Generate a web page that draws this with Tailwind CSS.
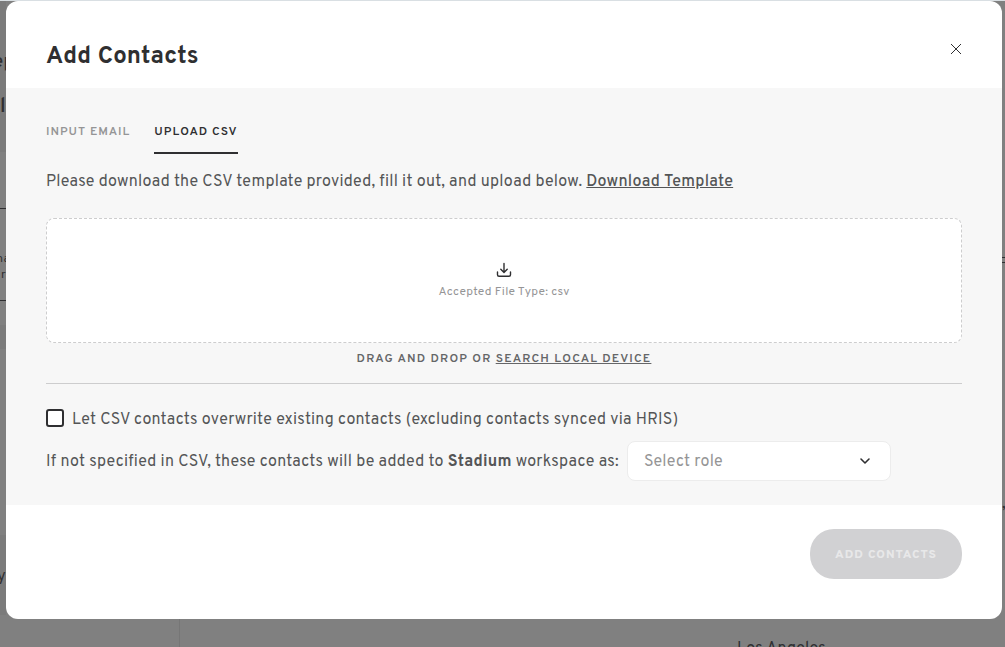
<!DOCTYPE html>
<html lang="en">
<head>
    <meta charset="UTF-8">
    <meta name="viewport" content="width=device-width, initial-scale=1.0">
    <title>Add Contacts</title>
    <script src="https://cdn.jsdelivr.net/npm/@tailwindcss/browser@4"></script>
</head>
<body class="relative h-screen overflow-hidden bg-[#808080] font-['Overpass','Roboto',sans-serif] text-base tracking-[0.016em] text-[#545556]">

<!-- Dimmed page -->
<div class="absolute inset-0 flex flex-col border-t border-[#d9dfe3] text-[#2f2f31]" aria-hidden="true">
    <div class="flex grow justify-between">
        <div class="flex w-1.5 flex-col items-end overflow-hidden">
            <div class="flex h-[151px] flex-col items-end bg-[#7b7b7b] pt-[50px] font-semibold">
                <p class="-mr-2 h-10 text-lg leading-6">ep</p>
                <p class="pt-1 text-xl leading-6">il</p>
            </div>
            <div class="mt-14 flex h-[93px] w-10 flex-col items-end border-y border-[#2f2f31] pt-[42px] text-xs">
                <p class="-mr-1">na</p>
                <p>r</p>
            </div>
            <div class="mt-6 h-6 w-full bg-[#7b7b7b]"></div>
            <div class="mt-[186px] flex h-20 flex-col items-end bg-[#7b7b7b] pt-[30px]">
                <p>y</p>
            </div>
        </div>
        <div class="w-[3px] overflow-hidden">
            <div class="mt-64 h-1.5 border-y border-[#2f2f31]"></div>
            <p class="mt-[229px]">,</p>
        </div>
    </div>
    <div class="flex h-7 overflow-hidden">
        <div class="w-[180px] shrink-0 border-r border-[#767676]"></div>
        <p class="ml-[557px] pt-[18px]">Los Angeles</p>
    </div>
</div>

<!-- Modal -->
<div class="relative mt-px mr-[3px] ml-1.5 overflow-hidden rounded-xl bg-white" role="dialog" aria-labelledby="modalTitle">
    <div class="flex items-start justify-between px-10 pt-10 pb-[15px]">
        <h1 id="modalTitle" class="text-2xl leading-8 font-bold text-[#2f2f31]">Add Contacts</h1>
        <button type="button" aria-label="Close" class="mt-0.5">
            <svg class="size-3" viewBox="0 0 12 12" fill="none" stroke="#2f2f31"><path d="M1 1l10 10M11 1L1 11"/></svg>
        </button>
    </div>

    <div class="bg-[#f7f7f7] px-10 pt-8 pb-6">
        <!-- Tabs -->
        <div class="flex gap-6 text-xs font-semibold tracking-[1px]" role="tablist">
            <button type="button" role="tab" aria-selected="false" class="pt-1 pb-3.5 text-[#959596]">INPUT EMAIL</button>
            <button type="button" role="tab" aria-selected="true" class="border-b-2 border-[#2f2f31] pt-1 pb-3 text-[#2f2f31]">UPLOAD CSV</button>
        </div>

        <p class="mt-4 leading-6">Please download the CSV template provided, fill it out, and upload below. <a href="#" class="font-medium underline">Download Template</a></p>

        <!-- Drop zone -->
        <div class="mt-6 flex h-[125px] flex-col items-center justify-center gap-1.5 rounded-lg border border-dashed border-[#cdcdce] bg-white">
            <svg class="size-4" viewBox="0 0 16 16" fill="none" stroke="#2f2f31" stroke-width="1.4" stroke-linecap="round" stroke-linejoin="round"><path d="M8 1.500v8.500M4.800 7.200L8 10.400l3.200-3.200M1.500 10v2.800c0 .9.600 1.500 1.500 1.500h10c.9 0 1.500-.6 1.500-1.500V10"/></svg>
            <p class="text-xs text-[#959596]">Accepted File Type: csv</p>
        </div>
        <p class="mt-2 text-center text-xs font-semibold tracking-widest text-[#656668]">DRAG AND DROP OR <a href="#" class="underline">SEARCH LOCAL DEVICE</a></p>

        <hr class="mt-4 border-[#cdcdce]">

        <label class="mt-[25px] flex items-start gap-2 leading-[22px]">
            <input type="checkbox" class="size-[18px] appearance-none rounded-[3px] border-2 border-[#2f2f31] bg-white">
            Let CSV contacts overwrite existing contacts (excluding contacts synced via HRIS)
        </label>

        <div class="mt-2.5 flex items-center gap-2">
            <label for="role" class="pt-0.5">If not specified in CSV, these contacts will be added to <strong class="font-bold">Stadium</strong> workspace as:</label>
            <div class="relative w-[264px]">
                <select id="role" class="h-10 w-full appearance-none rounded-lg border border-[#ececec] bg-white px-4 pt-0.5 text-[#959596]">
                    <option>Select role</option>
                </select>
                <svg class="pointer-events-none absolute top-3.5 right-5 size-3" viewBox="0 0 12 12" fill="none" stroke="#2f2f31" stroke-width="1.6" stroke-linecap="round" stroke-linejoin="round"><path d="M2 4l4 4 4-4"/></svg>
            </div>
        </div>
    </div>

    <div class="flex justify-end px-10 pt-6 pb-10">
        <button type="button" disabled class="h-[50px] w-[152px] rounded-3xl bg-[#d1d1d3] pt-0.5 text-xs font-extrabold tracking-[1px] text-[#e8e8e9]">ADD CONTACTS</button>
    </div>
</div>

</body>
</html>
